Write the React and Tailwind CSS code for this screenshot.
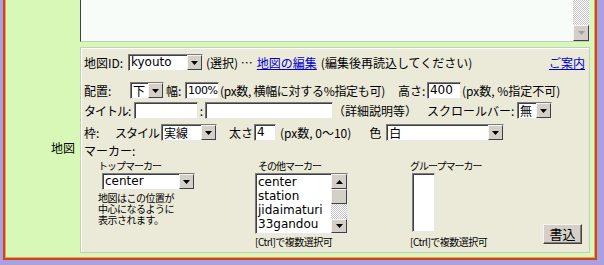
import React from "react";

const raised =
  "border border-t-[#f4f4f0] border-l-[#f4f4f0] border-b-[#404040] border-r-[#404040] bg-[#d4d0c8]";
const sunken =
  "border border-t-[#7b7b7b] border-l-[#7b7b7b] border-b-[#e8e8e8] border-r-[#e8e8e8] shadow-[inset_1px_1px_0_#404040] bg-white";
const checker =
  "bg-[repeating-conic-gradient(#c4c4c4_0%_25%,#ffffff_0%_50%)] bg-[length:2px_2px]";

function Arrow({ up, disabled }) {
  return (
    <svg width="7" height="4" viewBox="0 0 7 4">
      <path d={up ? "M3.5 0L7 4H0z" : "M0 0h7L3.5 4z"} fill={disabled ? "#a0a0a0" : "#000"} />
    </svg>
  );
}

function ScrollBtn({ up, disabled, className = "" }) {
  return (
    <div className={`flex shrink-0 items-center justify-center ${raised} ${className}`}>
      <Arrow up={up} disabled={disabled} />
    </div>
  );
}

function Select({ value, width, latin }) {
  return (
    <div className={`flex h-[17px] shrink-0 items-center ${sunken} ${width}`}>
      <span
        className={`flex-1 overflow-hidden whitespace-nowrap pl-[2px] leading-[15px] ${
          latin ? "font-['DejaVu_Sans',sans-serif] text-[12px]" : "text-[12px]"
        }`}
      >
        {value}
      </span>
      <ScrollBtn className="h-[15px] w-[15px]" />
    </div>
  );
}

function Field({ value, width, small }) {
  return (
    <div
      className={`h-[17px] shrink-0 overflow-hidden whitespace-nowrap pl-[2px] font-['DejaVu_Sans',sans-serif] leading-[15px] ${
        small ? "text-[11px] tracking-[-0.5px]" : "text-[12px]"
      } ${sunken} ${width}`}
    >
      {value}
    </div>
  );
}

function ListBox() {
  const items = ["center", "station", "jidaimaturi", "33gandou"];
  return (
    <div className={`flex h-[61px] w-[93px] ${sunken}`}>
      <div className="flex-1 overflow-hidden pl-[2px] pt-[1px] font-['DejaVu_Sans',sans-serif] text-[12px] leading-[14px]">
        {items.map((it) => (
          <div key={it}>{it}</div>
        ))}
      </div>
      <div className="flex w-[16px] flex-col">
        <ScrollBtn up className="h-[15px]" />
        <div className={`h-[15px] ${raised}`} />
        <div className={`flex-1 ${checker}`} />
        <ScrollBtn className="h-[14px]" />
      </div>
    </div>
  );
}

export default function App() {
  return (
    <div className="h-[265px] w-[604px] overflow-hidden bg-[#a8a0e0] font-['Noto_Sans_CJK_JP',sans-serif] text-[12px] text-black">
      <div className="ml-[3px] h-[260px] w-[594px] border-x-2 border-b-2 border-[#c84a10]">
        <div className="flex h-full flex-col border-x border-b border-[#f29a6a] bg-[#d8f8b8]">
          {/* previous row: textarea, cut at top */}
          <div className="flex h-[44px] shrink-0">
            <div className="w-[74px] shrink-0" />
            <div className="flex h-[42px] w-[510px] border-b border-l border-r border-b-[#c8c8c8] border-l-[#404040] border-r-[#e8e8e8] bg-[#f8fcf8]">
              <div className="flex-1" />
              <div className={`flex w-[16px] flex-col justify-end ${checker}`}>
                <ScrollBtn disabled className="h-[16px] w-[16px]" />
              </div>
            </div>
          </div>

          {/* map row */}
          <div className="flex flex-1">
            <div className="flex w-[74px] shrink-0 items-center justify-end pr-[5px] pb-[6px]">地図</div>
            <div className="mt-[3px] flex h-[206px] w-[510px] flex-col border border-[#c8ccbc] bg-[#ebead9] pl-[3px] shadow-[inset_1px_1px_0_#ffffff] leading-[17px] whitespace-nowrap">
              <div className="mt-[6px] flex h-[17px] items-center pr-[4px]">
                <span className="w-[44px]">地図ID:</span>
                <Select value="kyouto" width="w-[75px]" latin />
                <span className="ml-[3px]">(選択) …</span>
                <a className="ml-[4px] text-[#0000cc] underline">地図の編集</a>
                <span className="ml-[4px]">(編集後再読込してください)</span>
                <a className="ml-auto text-[#0000cc] underline">ご案内</a>
              </div>

              <div className="mt-[11px] flex h-[17px] items-center">
                <span className="w-[46px]">配置:</span>
                <Select value="下" width="w-[34px]" />
                <span className="ml-[2px] w-[19px]">幅:</span>
                <Field value="100%" width="w-[34px]" small />
                <span className="ml-[1px] tracking-[-0.3px]">(px数, 横幅に対する%指定も可)</span>
                <span className="ml-[13px] w-[29px]">高さ:</span>
                <Field value="400" width="w-[34px]" />
                <span className="ml-[1px]">(px数, %指定不可)</span>
              </div>

              <div className="mt-[3px] flex h-[17px] items-center">
                <span className="w-[50px] tracking-[-1px]">タイトル:</span>
                <Field value="" width="w-[64px]" />
                <span className="w-[7px] text-center">:</span>
                <Field value="" width="w-[128px]" />
                <span>（詳細説明等）</span>
                <span className="ml-[10px] w-[90px]">スクロールバー:</span>
                <Select value="無" width="w-[35px]" />
              </div>

              <div className="mt-[5px] flex h-[17px] items-center">
                <span className="w-[31px]">枠:</span>
                <span className="w-[46px] tracking-[-1px]">スタイル</span>
                <Select value="実線" width="w-[56px]" />
                <span className="ml-[12px] w-[25px]">太さ</span>
                <Field value="4" width="w-[22px]" />
                <span className="ml-[4px]">(px数, 0〜10)</span>
                <span className="ml-[18px] w-[17px]">色</span>
                <Select value="白" width="w-[118px]" />
              </div>

              <div className="mt-[2px] h-[16px] leading-[16px]">マーカー:</div>

              <div className="flex">
                <div className="ml-[14px] w-[157px] shrink-0">
                  <div className="h-[14px] text-[10px] leading-[14px] tracking-[-1px]">トップマーカー</div>
                  <div className="ml-[4px]">
                    <Select value="center" width="w-[93px]" latin />
                  </div>
                  <div className="mt-[2px] text-[10px] leading-[11px] tracking-[-0.5px]">
                    <div>地図はこの位置が</div>
                    <div>中心になるように</div>
                    <div>表示されます。</div>
                  </div>
                </div>
                <div className="w-[155px] shrink-0">
                  <div className="ml-[3px] h-[14px] text-[10px] leading-[14px] tracking-[-1px]">その他マーカー</div>
                  <ListBox />
                  <div className="mt-[2px] text-[10px] leading-[12px] tracking-[-0.5px]">[Ctrl]で複数選択可</div>
                </div>
                <div className="flex-1">
                  <div className="h-[14px] text-[10px] leading-[14px] tracking-[-1px]">グループマーカー</div>
                  <div className={`ml-[2px] h-[59px] w-[23px] ${sunken}`} />
                  <div className="mt-[4px] text-[10px] leading-[12px] tracking-[-0.5px]">[Ctrl]で複数選択可</div>
                </div>
                <button
                  className={`mr-[7px] mt-[65px] h-[20px] w-[39px] shrink-0 text-[13px] leading-[16px] ${raised} shadow-[inset_-1px_-1px_0_#808080]`}
                >
                  書込
                </button>
              </div>
            </div>
          </div>
        </div>
      </div>
    </div>
  );
}
